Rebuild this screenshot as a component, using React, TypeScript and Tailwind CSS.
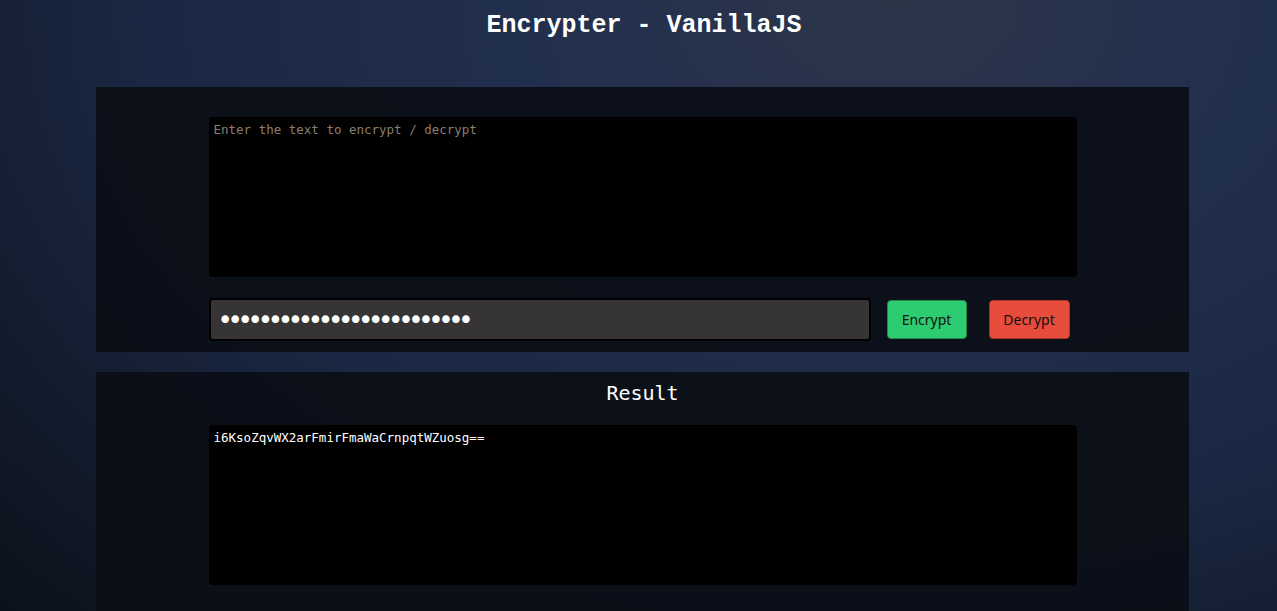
import { useState } from "react";

export default function App() {
  const [text, setText] = useState("");
  const [password, setPassword] = useState("abcdefghijklmnopqrstuvwxy");
  const [result] = useState("i6KsoZqvWX2arFmirFmaWaCrnpqtWZuosg==");

  return (
    <div className="min-h-[611px] w-full overflow-hidden bg-[radial-gradient(ellipse_at_70%_0%,#2d3549_0%,#212f4e_30%,#1a2742_60%,#0b1018_100%)] pb-0">
      <h1 className="pl-[11px] pt-[11px] text-center font-['Liberation_Mono',monospace] text-[25px] font-bold leading-[30px] text-white">
        Encrypter - VanillaJS
      </h1>

      {/* input panel */}
      <div className="ml-[96px] mt-[46px] w-[1093px] bg-[#0b0f17]/95 pb-[11px] pt-[30px]">
        <div className="mx-auto w-[868px]">
          <textarea
            value={text}
            onChange={(e) => setText(e.target.value)}
            placeholder="Enter the text to encrypt / decrypt"
            className="block h-[160px] w-full resize-none rounded bg-black px-[5px] py-[5px] font-['DejaVu_Sans_Mono',monospace] text-[12.5px] leading-[15px] text-white outline-none placeholder:text-[#8a7f70]"
          />
          <div className="mt-[21px] flex items-center">
            <input
              type="password"
              value={password}
              onChange={(e) => setPassword(e.target.value)}
              className="h-[43px] w-[662px] rounded border-2 border-black bg-[#363434] px-[7px] font-['DejaVu_Sans',sans-serif] text-[26px] tracking-[-5.3px] text-white outline-none"
            />
            <button className="ml-[16px] h-[39px] w-[80px] rounded border border-[#1f8a4c] bg-[#2ecc71] font-['Noto_Sans',sans-serif] text-[14px] text-[#111]">
              Encrypt
            </button>
            <button className="ml-[22px] h-[39px] w-[81px] rounded border border-[#a8352a] bg-[#e74c3c] font-['Noto_Sans',sans-serif] text-[14px] text-[#111]">
              Decrypt
            </button>
          </div>
        </div>
      </div>

      {/* result panel */}
      <div className="ml-[96px] mt-[20px] h-[260px] w-[1093px] bg-[#0b0f17]/95 pt-[8px]">
        <h2 className="text-center font-['DejaVu_Sans_Mono',monospace] text-[20px] leading-[26px] text-white">
          Result
        </h2>
        <div className="mx-auto mt-[19px] w-[868px]">
          <textarea
            readOnly
            value={result}
            className="block h-[160px] w-full resize-none rounded bg-black px-[5px] py-[5px] font-['DejaVu_Sans_Mono',monospace] text-[12.5px] leading-[15px] text-white outline-none"
          />
        </div>
      </div>
    </div>
  );
}
